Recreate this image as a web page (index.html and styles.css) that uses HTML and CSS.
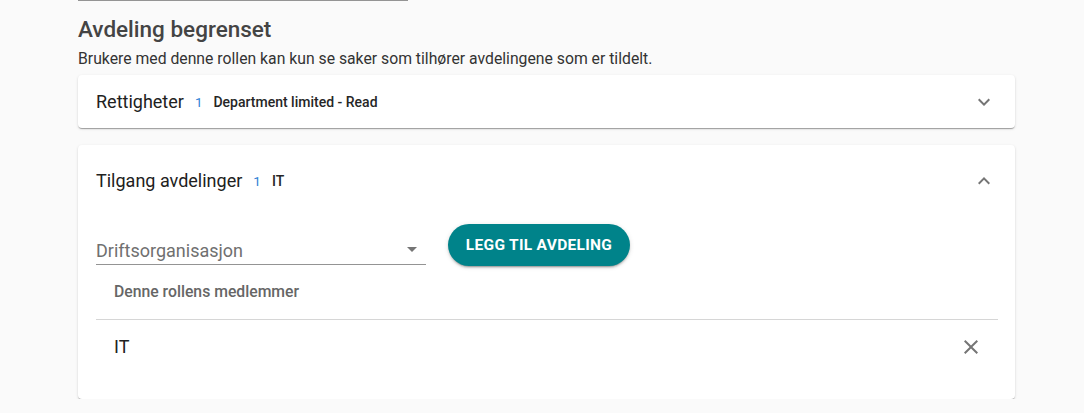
FILE: index.html
```html
<!DOCTYPE html>
<html lang="no">
<head>
<meta charset="utf-8">
<link rel="stylesheet" href="styles.css">
</head>
<body>
<div class="page">
  <div class="topline"></div>
  <h2 class="title">Avdeling begrenset</h2>
  <p class="desc">Brukere med denne rollen kan kun se saker som tilhører avdelingene som er tildelt.</p>

  <section class="card">
    <div class="panel-head collapsed">
      <span class="head-title">Rettigheter</span>
      <span class="count">1</span>
      <span class="summary">Department limited - Read</span>
      <svg class="chev" width="24" height="24" viewBox="0 0 24 24"><path d="M16.59 8.59L12 13.17 7.41 8.59 6 10l6 6 6-6z"/></svg>
    </div>
  </section>

  <section class="card card-open">
    <div class="panel-head expanded">
      <span class="head-title">Tilgang avdelinger</span>
      <span class="count">1</span>
      <span class="summary">IT</span>
      <svg class="chev" width="24" height="24" viewBox="0 0 24 24"><path d="M12 8l-6 6 1.41 1.41L12 10.83l4.59 4.58L18 14z"/></svg>
    </div>
    <div class="panel-body">
      <div class="add-row">
        <div class="select">
          <span class="select-label">Driftsorganisasjon</span>
          <span class="select-arrow"></span>
        </div>
        <button class="btn">LEGG TIL AVDELING</button>
      </div>
      <div class="members-head">Denne rollens medlemmer</div>
      <div class="member">
        <span class="member-name">IT</span>
        <svg class="close" width="24" height="24" viewBox="0 0 24 24"><path d="M19 6.41L17.59 5 12 10.59 6.41 5 5 6.41 10.59 12 5 17.59 6.41 19 12 13.41 17.59 19 19 17.59 13.41 12z"/></svg>
      </div>
    </div>
  </section>
</div>
</body>
</html>
```

FILE: styles.css
```css
html, body {
  margin: 0;
  padding: 0;
  background: #fafafa;
  font-family: Roboto, "Liberation Sans", Arial, sans-serif;
  color: #212121;
}
.page {
  width: 937px;
  margin-left: 78px;
  display: flex;
  flex-direction: column;
}
.topline {
  width: 330px;
  height: 1px;
  background: #949494;
}
.title {
  margin: 14px 0 0;
  font-size: 22.5px;
  font-weight: 500;
  line-height: 28px;
  color: #444;
}
.desc {
  margin: 6px 0 0;
  font-size: 15.75px;
  line-height: 20px;
  color: #333;
}
.card {
  background: #fff;
  border-radius: 4px;
  box-shadow: 0 2px 1px -1px rgba(0,0,0,.2), 0 1px 1px 0 rgba(0,0,0,.14), 0 1px 3px 0 rgba(0,0,0,.12);
  margin-top: 6px;
}
.card-open {
  margin-top: 17px;
}
.panel-head {
  display: flex;
  align-items: center;
  padding: 0 19px 0 18px;
}
.collapsed { height: 53px; }
.expanded { height: 71px; }
.head-title {
  font-size: 18px;
  line-height: 22px;
}
.count {
  font-size: 13.5px;
  color: #2f7fd6;
  margin-left: 11px;
}
.summary {
  font-size: 14px;
  font-weight: 500;
  color: #262626;
  margin-left: 11px;
}
.chev {
  margin-left: auto;
  fill: #757575;
}
.panel-body {
  padding: 8px 17px 0 18px;
  display: flex;
  flex-direction: column;
}
.add-row {
  display: flex;
  align-items: flex-end;
  gap: 22px;
}
.select {
  width: 330px;
  height: 30px;
  border-bottom: 1px solid #949494;
  display: flex;
  align-items: center;
  justify-content: space-between;
  box-sizing: border-box;
}
.select-label {
  font-size: 18px;
  color: #707070;
  padding-top: 2px;
}
.select-arrow {
  width: 0;
  height: 0;
  border-left: 5px solid transparent;
  border-right: 5px solid transparent;
  border-top: 5px solid #757575;
  margin-right: 9px;
}
.btn {
  width: 182px;
  height: 42px;
  border: none;
  border-radius: 21px;
  background: #00838a;
  color: #fff;
  font-family: Roboto, "Liberation Sans", Arial, sans-serif;
  font-size: 15.5px;
  font-weight: 700;
  letter-spacing: 0.3px;
  padding: 0;
  box-shadow: 0 3px 1px -2px rgba(0,0,0,.2), 0 2px 2px 0 rgba(0,0,0,.14), 0 1px 5px 0 rgba(0,0,0,.12);
  margin-bottom: -1px;
}
.members-head {
  font-size: 15.75px;
  font-weight: 500;
  color: #666;
  padding: 17px 18px 0;
  box-sizing: border-box;
  line-height: 20px;
  border-bottom: 1px solid #d6d6d6;
  height: 55px;
}
.member {
  display: flex;
  align-items: center;
  justify-content: space-between;
  height: 53px;
  padding: 0 15px 0 18px;
  margin-bottom: 26px;
}
.member-name {
  font-size: 18px;
}
.close {
  fill: #757575;
}
```
